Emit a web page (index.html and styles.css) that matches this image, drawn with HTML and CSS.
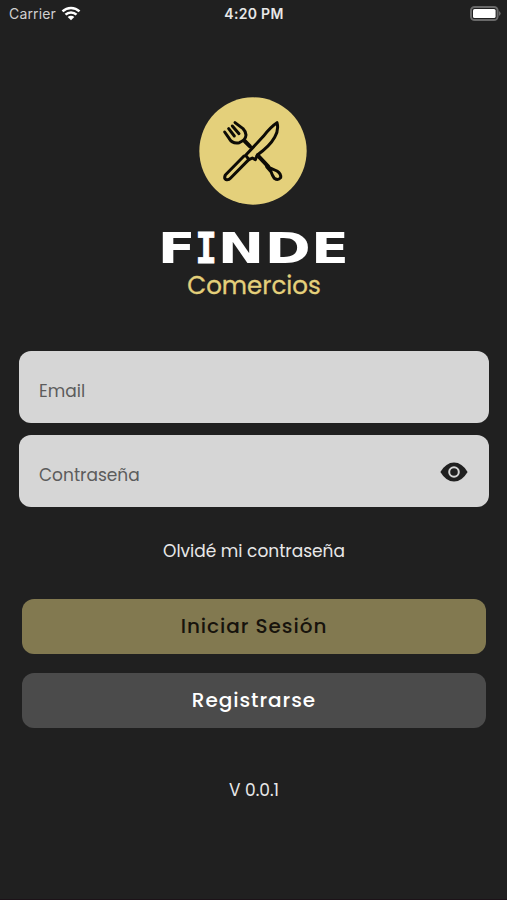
FILE: index.html
```html
<!DOCTYPE html>
<html lang="es">
<head>
    <meta charset="UTF-8">
    <meta name="viewport" content="width=device-width, initial-scale=1.0">
    <title>Finde Comercios</title>
    <link rel="stylesheet" href="styles.css">
</head>
<body>
    <div class="status-bar">
        <div class="carrier">
            <span class="carrier-name">Carrier</span>
            <svg class="wifi" viewBox="0 0 20 15">
                <path d="M1.5 5.4a12.2 12.2 0 0 1 17 0" />
                <path d="M4.5 8.7a7.8 7.8 0 0 1 11 0" />
                <path class="wifi-dot" d="M10 14.3 6.7 11a4.7 4.7 0 0 1 6.6 0z" />
            </svg>
        </div>
        <span class="time">4:20 PM</span>
        <svg class="battery" viewBox="0 0 31 15">
            <rect class="battery-case" x="1" y="1" width="26.6" height="13" rx="3.6" />
            <rect class="battery-level" x="3" y="3" width="22.6" height="9" rx="1.6" />
            <path class="battery-tip" d="M29 5q3.4 2.5 0 5z" />
        </svg>
    </div>
    <main class="login">
        <!-- fork and knife -->
        <svg class="logo" viewBox="28 20 324 324">
            <circle cx="190" cy="182" r="161" />
            <g class="cutlery">
                <path d="M105 125 L119 145 Q128 161 149 157 Q168 149 169 134 Q168 123 160 115 L136 97" />
                <path d="M117 115 L134 137 M128 107 L148 130" />
                <path class="neck" d="M165 152 L181 168" />
                <path d="M262 97 Q268 118 255 141 Q240 168 203 194 L197 208 L188 203 L178 208 L168 195 L221 138 Q242 110 262 97z" />
                <path d="M163 197 L107 254 Q102 264 109 268 Q117 270 123 263 L175 210" />
                <path class="neck" d="M204 195 L236 229" />
                <path d="M231 229 Q246 235 262 242 Q275 251 273 262 Q265 272 254 264 Q247 254 244 244z" />
            </g>
        </svg>
        <h1>F<span>I</span>NDE</h1>
        <h2>Comercios</h2>
        <form class="login-form">
            <label class="field"><span class="email">Email</span></label>
            <label class="field">
                <span class="password">Contraseña</span>
                <svg class="eye" viewBox="0 0 28 20">
                    <path d="M.4 10Q6 .5 14 .5T27.6 10Q22 19.5 14 19.5T.4 10z" />
                    <circle class="eye-ring" cx="14" cy="10" r="4.8" />
                </svg>
            </label>
            <a class="forgot">Olvidé mi contraseña</a>
            <button class="btn btn-login" type="button">Iniciar Sesión</button>
            <button class="btn btn-register" type="button">Registrarse</button>
        </form>
        <p class="version">V 0.0.1</p>
    </main>
</body>
</html>
```

FILE: styles.css
```css
*{
    box-sizing: border-box;
}
body{
    margin: 0;
    height: 900px;
    background-color: #202020;
    border-bottom: 1px solid #1c1218;
    color: #e8e8e8;
    font-family: Poppins, Inter, sans-serif;
    overflow: hidden;
}
.status-bar{
    display: grid;
    grid-template-columns: 1fr auto 1fr;
    align-items: center;
    height: 26px;
    padding: 0 6px 0 9px;
    font-family: Inter, sans-serif;
    font-size: 14px;
}
.carrier{
    display: flex;
    align-items: center;
    gap: 5px;
}
.carrier-name{
    color: #d0d0d0;
    letter-spacing: 0.15px;
}
.wifi{
    width: 20px;
    height: 15px;
    fill: none;
    stroke: #ffffff;
    stroke-width: 2.5;
}
.wifi .wifi-dot{
    fill: #ffffff;
    stroke: none;
}
.time{
    margin-right: 2px;
    font-weight: 600;
    letter-spacing: 0.3px;
}
.battery{
    width: 31px;
    height: 15px;
    justify-self: end;
}
.battery-case{
    fill: none;
    stroke: #696969;
    stroke-width: 2;
}
.battery-level{
    fill: #ffffff;
}
.battery-tip{
    fill: #696969;
}
.login{
    display: flex;
    flex-direction: column;
    align-items: center;
    padding: 71px 18px 0 19px;
}
.logo{
    width: 108px;
    height: 108px;
    margin-right: 2px;
    fill: #e4d07b;
}
.cutlery{
    fill: none;
    stroke: #0d0b06;
    stroke-width: 9;
    stroke-linecap: round;
    stroke-linejoin: round;
}
.neck{
    stroke-width: 12;
}
h1{
    margin: 24px 0 0;
    height: 39px;
    font-family: "DejaVu Sans", sans-serif;
    font-size: 42px;
    font-weight: bold;
    letter-spacing: 0.3px;
    line-height: 39px;
    color: #ffffff;
    transform: scaleX(1.32);
}
/* narrow slab I */
h1 span{
    display: inline-block;
    margin: 0 -4.5px 0 -4.6px;
    font-family: "DejaVu Sans Mono", monospace;
    -webkit-text-stroke: 0.8px #ffffff;
    transform: scaleX(0.65);
}
h2{
    margin: 1px 0 0;
    height: 34px;
    font-size: 24.5px;
    font-weight: 400;
    line-height: 34px;
    color: #e4d07b;
    -webkit-text-stroke: 0.3px #e4d07b;
}
.login-form{
    display: flex;
    flex-direction: column;
    width: 100%;
    margin-top: 48px;
}
.field{
    display: flex;
    align-items: center;
    justify-content: space-between;
    height: 72px;
    margin-bottom: 12px;
    padding: 8px 21px 0 20px;
    background-color: #d6d6d6;
    border-radius: 12px;
    font-size: 17px;
    color: #5c5c5c;
}
.eye{
    width: 28px;
    height: 20px;
    margin-top: -7px;
    fill: #202020;
}
.eye-ring{
    stroke: #d6d6d6;
    stroke-width: 2;
}
.forgot{
    margin-top: 20px;
    height: 47px;
    line-height: 24px;
    font-size: 17px;
    text-align: center;
}
.btn{
    height: 55px;
    margin: 13px 3px 6px;
    padding: 0;
    border: 0;
    border-radius: 12px;
    font-family: inherit;
    font-size: 20px;
    font-weight: 500;
    line-height: 53px;
    letter-spacing: 0.95px;
}
.btn-login{
    background-color: #827950;
    color: #17130c;
}
.btn-register{
    background-color: #4b4b4b;
    color: #ffffff;
}
.version{
    margin: 44px 0 0;
    font-size: 17px;
    line-height: 24px;
}
```
